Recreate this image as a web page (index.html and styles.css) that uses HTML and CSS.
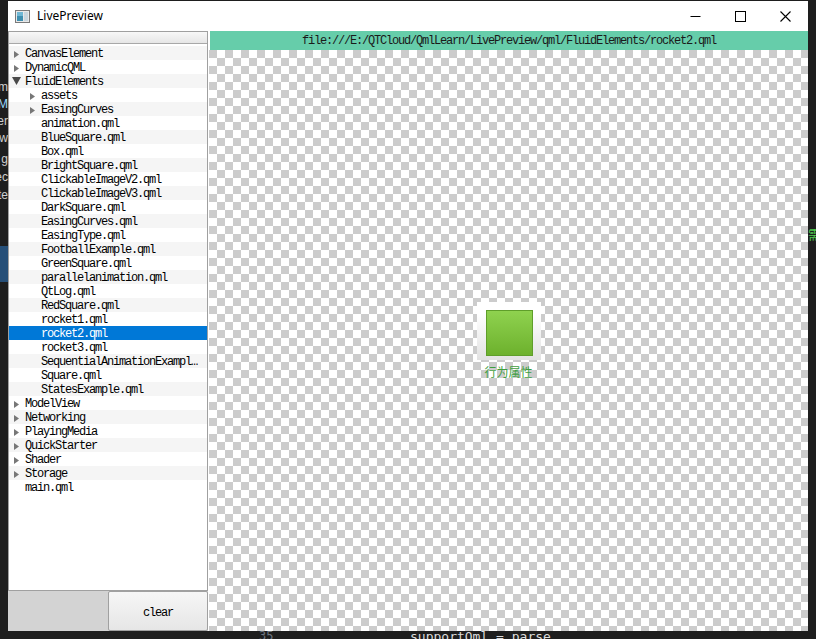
FILE: index.html
```html
<!DOCTYPE html>
<html>
<head>
<meta charset="utf-8">
<title>LivePreview</title>
<link rel="stylesheet" href="styles.css">
</head>
<body>
<div class="screen">
  <div class="main-row">
    <div class="edge edge-left">
      <span class="frag f1">m</span>
      <span class="frag f2">M</span>
      <span class="frag f3">er</span>
      <span class="frag f4">w</span>
      <span class="frag f5">g</span>
      <span class="frag f6">ec</span>
      <span class="frag f7">te</span>
      <span class="sel-frag"></span>
    </div>
    <div class="window">
      <div class="titlebar">
        <svg class="app-icon" width="15" height="13" viewBox="0 0 15 13">
          <rect x="0.5" y="0.5" width="14" height="12" fill="#e8e8e8" stroke="#7a7a7a"/>
          <rect x="2" y="2" width="6" height="9" fill="#3e8fb0"/>
          <rect x="2" y="2" width="6" height="4" fill="#6fb7d4"/>
          <rect x="9" y="2" width="4" height="9" fill="#c9d6de"/>
        </svg>
        <span class="title">LivePreview</span>
        <div class="controls">
          <div class="ctl"><svg width="11" height="11" viewBox="0 0 11 11"><line x1="0.5" y1="5.5" x2="10.5" y2="5.5" stroke="#000" stroke-width="1"/></svg></div>
          <div class="ctl"><svg width="11" height="11" viewBox="0 0 11 11"><rect x="0.5" y="0.5" width="10" height="10" fill="none" stroke="#000" stroke-width="1"/></svg></div>
          <div class="ctl"><svg width="11" height="11" viewBox="0 0 11 11"><path d="M0.5 0.5 L10.5 10.5 M10.5 0.5 L0.5 10.5" stroke="#000" stroke-width="1.1"/></svg></div>
        </div>
      </div>
      <div class="content">
        <div class="left">
          <div class="tree">
            <div class="tree-header"></div>
            <div class="rows">
              <div class="row l0"><span class="arrow"><svg width="16" height="14" viewBox="0 0 16 14"><polygon points="5,5 10,8.5 5,12" fill="#777"/></svg></span><span class="name">CanvasElement</span></div>
              <div class="row l0"><span class="arrow"><svg width="16" height="14" viewBox="0 0 16 14"><polygon points="5,5 10,8.5 5,12" fill="#777"/></svg></span><span class="name">DynamicQML</span></div>
              <div class="row l0"><span class="arrow"><svg width="16" height="14" viewBox="0 0 16 14"><polygon points="3,3 12,3 7.5,11" fill="#4a4a4a"/></svg></span><span class="name">FluidElements</span></div>
              <div class="row l1"><span class="arrow"><svg width="16" height="14" viewBox="0 0 16 14"><polygon points="5,5 10,8.5 5,12" fill="#777"/></svg></span><span class="name">assets</span></div>
              <div class="row l1"><span class="arrow"><svg width="16" height="14" viewBox="0 0 16 14"><polygon points="5,5 10,8.5 5,12" fill="#777"/></svg></span><span class="name">EasingCurves</span></div>
              <div class="row l1"><span class="arrow"></span><span class="name">animation.qml</span></div>
              <div class="row l1"><span class="arrow"></span><span class="name">BlueSquare.qml</span></div>
              <div class="row l1"><span class="arrow"></span><span class="name">Box.qml</span></div>
              <div class="row l1"><span class="arrow"></span><span class="name">BrightSquare.qml</span></div>
              <div class="row l1"><span class="arrow"></span><span class="name">ClickableImageV2.qml</span></div>
              <div class="row l1"><span class="arrow"></span><span class="name">ClickableImageV3.qml</span></div>
              <div class="row l1"><span class="arrow"></span><span class="name">DarkSquare.qml</span></div>
              <div class="row l1"><span class="arrow"></span><span class="name">EasingCurves.qml</span></div>
              <div class="row l1"><span class="arrow"></span><span class="name">EasingType.qml</span></div>
              <div class="row l1"><span class="arrow"></span><span class="name">FootballExample.qml</span></div>
              <div class="row l1"><span class="arrow"></span><span class="name">GreenSquare.qml</span></div>
              <div class="row l1"><span class="arrow"></span><span class="name">parallelanimation.qml</span></div>
              <div class="row l1"><span class="arrow"></span><span class="name">QtLog.qml</span></div>
              <div class="row l1"><span class="arrow"></span><span class="name">RedSquare.qml</span></div>
              <div class="row l1"><span class="arrow"></span><span class="name">rocket1.qml</span></div>
              <div class="row l1 selected"><span class="arrow"></span><span class="name">rocket2.qml</span></div>
              <div class="row l1"><span class="arrow"></span><span class="name">rocket3.qml</span></div>
              <div class="row l1"><span class="arrow"></span><span class="name">SequentialAnimationExampl…</span></div>
              <div class="row l1"><span class="arrow"></span><span class="name">Square.qml</span></div>
              <div class="row l1"><span class="arrow"></span><span class="name">StatesExample.qml</span></div>
              <div class="row l0"><span class="arrow"><svg width="16" height="14" viewBox="0 0 16 14"><polygon points="5,5 10,8.5 5,12" fill="#777"/></svg></span><span class="name">ModelView</span></div>
              <div class="row l0"><span class="arrow"><svg width="16" height="14" viewBox="0 0 16 14"><polygon points="5,5 10,8.5 5,12" fill="#777"/></svg></span><span class="name">Networking</span></div>
              <div class="row l0"><span class="arrow"><svg width="16" height="14" viewBox="0 0 16 14"><polygon points="5,5 10,8.5 5,12" fill="#777"/></svg></span><span class="name">PlayingMedia</span></div>
              <div class="row l0"><span class="arrow"><svg width="16" height="14" viewBox="0 0 16 14"><polygon points="5,5 10,8.5 5,12" fill="#777"/></svg></span><span class="name">QuickStarter</span></div>
              <div class="row l0"><span class="arrow"><svg width="16" height="14" viewBox="0 0 16 14"><polygon points="5,5 10,8.5 5,12" fill="#777"/></svg></span><span class="name">Shader</span></div>
              <div class="row l0"><span class="arrow"><svg width="16" height="14" viewBox="0 0 16 14"><polygon points="5,5 10,8.5 5,12" fill="#777"/></svg></span><span class="name">Storage</span></div>
              <div class="row l0"><span class="arrow"></span><span class="name">main.qml</span></div>
            </div>
          </div>
          <div class="bottom">
            <div class="blank"></div>
            <div class="clear-btn">clear</div>
          </div>
        </div>
        <div class="right">
          <div class="url">file:///E:/QTCloud/QmlLearn/LivePreview/qml/FluidElements/rocket2.qml</div>
          <div class="canvas">
            <div class="item">
              <div class="item-box"><div class="green-square"></div></div>
              <div class="item-label">行为属性</div>
            </div>
          </div>
        </div>
      </div>
    </div>
    <div class="edge edge-right">
      <span class="frag-cn">需</span>
    </div>
  </div>
  <div class="bottom-strip">
    <span class="line-no">35</span>
    <span class="code-frag">supportQml = parse</span>
  </div>
</div>
</body>
</html>
```

FILE: styles.css
```css
html, body {
  margin: 0;
  padding: 0;
}
body {
  width: 816px;
  height: 639px;
  background: #1e1e1e;
  overflow: hidden;
}
.screen {
  display: flex;
  flex-direction: column;
  width: 816px;
  height: 639px;
}
.main-row {
  display: flex;
  height: 631px;
  flex: none;
}
.edge {
  width: 8px;
  flex: none;
  position: relative;
  overflow: hidden;
}
.frag {
  position: absolute;
  right: 0;
  font-family: "Liberation Sans", sans-serif;
  font-size: 12px;
  color: #cfcfcf;
  line-height: 14px;
}
.f1 { top: 80px; }
.f2 { top: 97px; color: #9cdcfe; }
.f3 { top: 114px; }
.f4 { top: 131px; }
.f5 { top: 152px; }
.f6 { top: 170px; }
.f7 { top: 188px; }
.sel-frag {
  position: absolute;
  left: 0;
  top: 246px;
  width: 8px;
  height: 36px;
  background: #264f78;
}
.frag-cn {
  position: absolute;
  left: 0;
  top: 224px;
  font-family: "Noto Sans CJK SC", sans-serif;
  font-size: 13px;
  color: #4ec94e;
}
.bottom-strip {
  flex: 1;
  position: relative;
  overflow: hidden;
}
.line-no {
  position: absolute;
  left: 259px;
  top: -2px;
  font-family: "DejaVu Sans Mono", monospace;
  font-size: 12px;
  line-height: 14px;
  color: #6e7681;
}
.code-frag {
  position: absolute;
  left: 410px;
  top: -1px;
  font-family: "DejaVu Sans Mono", monospace;
  font-size: 13px;
  line-height: 14px;
  color: #dcdcdc;
}
.window {
  width: 800px;
  height: 630px;
  margin-top: 1px;
  flex: none;
  display: flex;
  flex-direction: column;
  background: #f0f0f0;
}
.titlebar {
  height: 30px;
  flex: none;
  background: #fff;
  display: flex;
  align-items: center;
}
.app-icon {
  margin-left: 7px;
  margin-top: 0;
}
.title {
  margin-left: 7px;
  margin-top: -1px;
  font-family: "Segoe UI", "Noto Sans", sans-serif;
  font-size: 12px;
  color: #000;
}
.controls {
  margin-left: auto;
  display: flex;
  height: 30px;
}
.ctl {
  width: 45px;
  height: 30px;
  display: flex;
  align-items: center;
  justify-content: center;
}
.content {
  flex: 1;
  display: flex;
  min-height: 0;
}
.left {
  width: 200px;
  flex: none;
  display: flex;
  flex-direction: column;
}
.tree {
  flex: 1;
  background: #fff;
  border: 1px solid #a0a0a0;
  display: flex;
  flex-direction: column;
  min-height: 0;
}
.tree-header {
  height: 11px;
  flex: none;
  background: linear-gradient(#f8f8f8, #e6e6e6);
  border-bottom: 1px solid #a8a8a8;
}
.rows {
  padding-top: 2px;
  font-family: "Liberation Mono", monospace;
  font-size: 12px;
  letter-spacing: -1.2px;
  color: #000;
}
.row {
  height: 14px;
  line-height: 16px;
  display: flex;
  white-space: nowrap;
  overflow: hidden;
}
.row:nth-child(odd) {
  background: #f5f5f5;
}
.row.l1 {
  padding-left: 16px;
}
.row.selected {
  background: #0078d7;
  color: #fff;
}
.arrow {
  width: 16px;
  height: 14px;
  flex: none;
  display: block;
}
.arrow svg {
  display: block;
}
.bottom {
  height: 40px;
  flex: none;
  display: flex;
  background: #d3d3d3;
}
.blank {
  width: 100px;
  background: #d3d3d3;
}
.clear-btn {
  flex: 1;
  border: 1px solid #a0a0a0;
  border-radius: 2px;
  background: linear-gradient(#f6f6f6, #e6e6e6);
  display: flex;
  align-items: center;
  justify-content: center;
  padding-top: 3px;
  font-family: "Liberation Mono", monospace;
  font-size: 12px;
  letter-spacing: -1.2px;
  color: #000;
}
.right {
  flex: 1;
  display: flex;
  flex-direction: column;
  padding-left: 1px;
  background: #fff;
}
.url {
  height: 19px;
  flex: none;
  margin-left: 1px;
  background: #66cdaa;
  text-align: center;
  line-height: 20px;
  font-family: "Liberation Mono", monospace;
  font-size: 12px;
  letter-spacing: -1.2px;
  color: #1a1a1a;
}
.canvas {
  flex: 1;
  background-color: #fff;
  background-image: conic-gradient(#fff 25%, #ccc 0 50%, #fff 0 75%, #ccc 0);
  background-size: 16px 16px;
  display: flex;
  align-items: center;
  justify-content: center;
}
.item {
  display: flex;
  flex-direction: column;
  align-items: center;
  margin-top: 0;
}
.item-box {
  width: 64px;
  height: 58px;
  box-sizing: border-box;
  padding: 8px 0 0 9px;
  background: linear-gradient(#ffffff 20%, #e2e2e2);
}
.green-square {
  width: 45px;
  height: 44px;
  border: 1px solid #5f9e2a;
  background: linear-gradient(#8fd24f, #6db12d);
}
.item-label {
  margin-top: 4px;
  font-family: "Noto Sans CJK SC", sans-serif;
  font-size: 12px;
  line-height: 16px;
  color: #3f9f3f;
}
```
